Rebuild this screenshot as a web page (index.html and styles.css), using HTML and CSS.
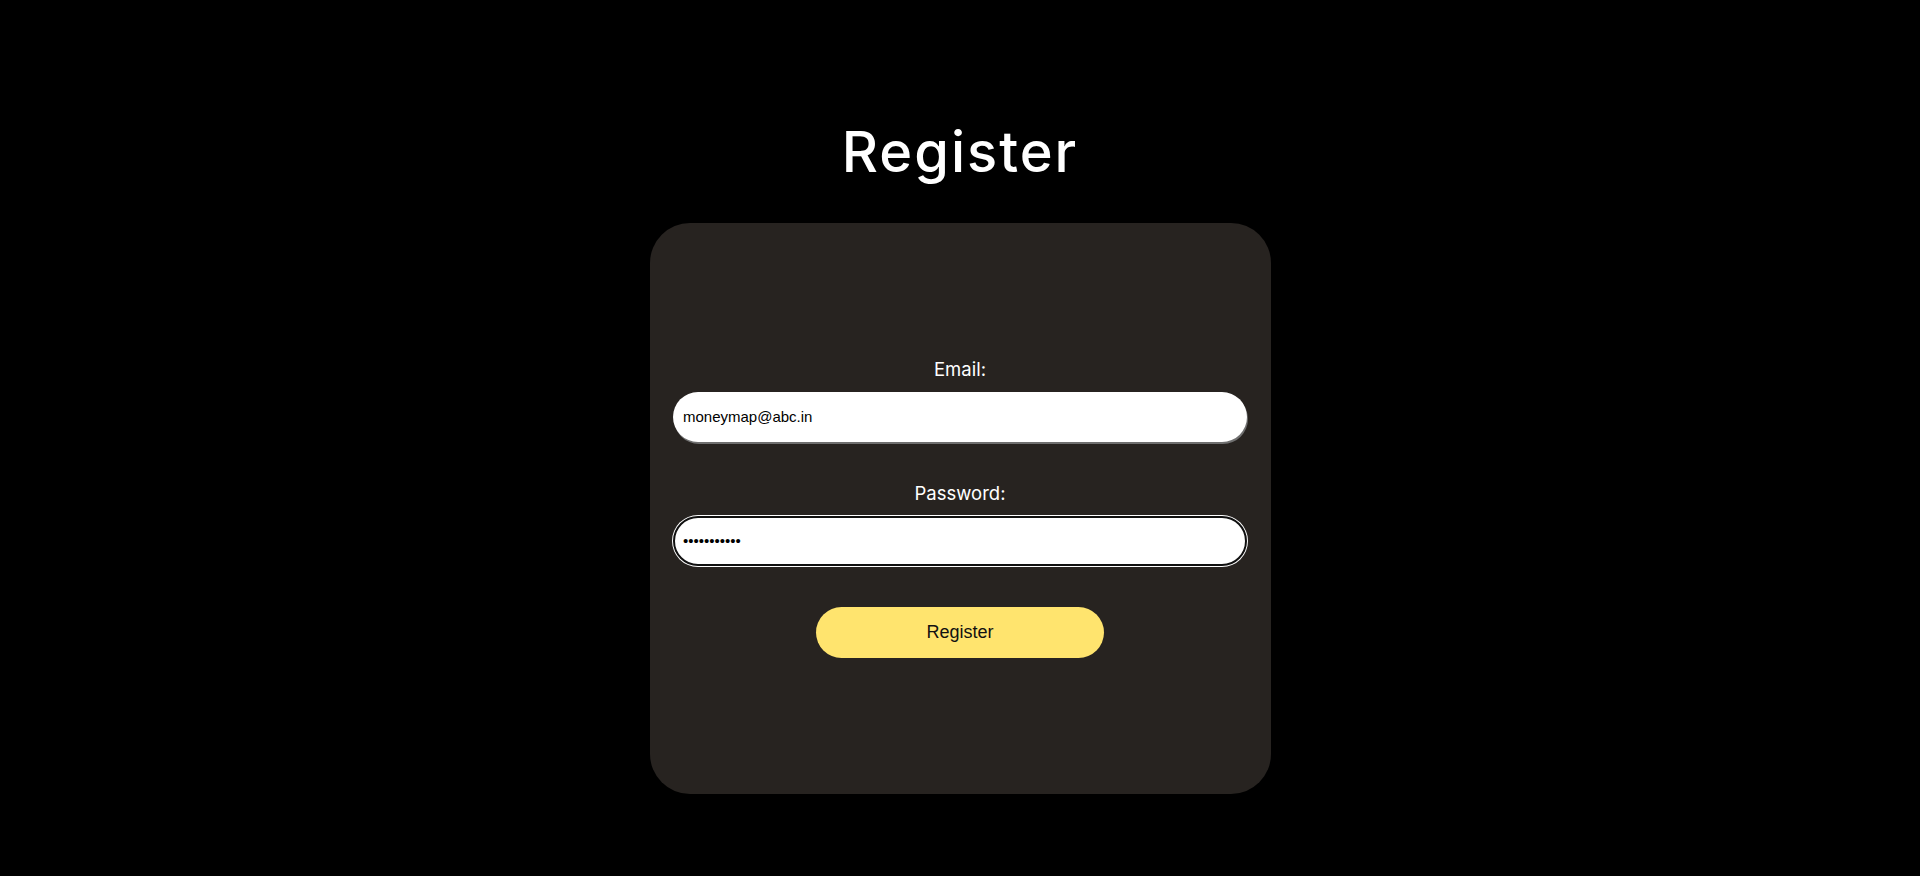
FILE: index.html
```html
<!DOCTYPE html>
<html lang="en">

<head>
    <meta charset="UTF-8">
    <meta name="viewport" content="width=device-width, initial-scale=1.0">
    <title>Register</title>
    <link rel="stylesheet" href="styles.css">
</head>

<body>
    <h1 class="title">Register</h1>

    <!-- Register form -->
    <div class="card">
        <form class="form" onsubmit="return false;">
            <label for="email">Email:</label>
            <input type="email" id="email" class="field field-email" value="moneymap@abc.in">

            <label for="password">Password:</label>
            <input type="password" id="password" class="field field-active" value="12345678901">

            <button type="submit" class="btn">Register</button>
        </form>
    </div>
</body>

</html>
```

FILE: styles.css
```css
body {
    font-family: Inter, 'Noto Sans', sans-serif;
    background-color: #000;
    color: #fff;
    margin: 0;
    padding: 118px 0 0;
    box-sizing: border-box;
}

.title {
    margin: 0;
    text-align: center;
    font-size: 56px;
    font-weight: 500;
    line-height: 68px;
    letter-spacing: 2px;
}

.card {
    width: 621px;
    height: 571px;
    margin: 37px auto 0;
    padding-bottom: 2px;
    box-sizing: border-box;
    background-color: #272320;
    border-radius: 40px;
    display: flex;
    align-items: center;
    justify-content: center;
}

.form {
    width: 574px;
    display: flex;
    flex-direction: column;
    align-items: center;
}

label {
    font-size: 18.5px;
    line-height: 22px;
    margin-bottom: 12px;
}

.field {
    width: 100%;
    height: 50px;
    box-sizing: border-box;
    margin: 0 0 40px;
    padding: 0 10px;
    border: none;
    border-radius: 25px;
    background-color: #fff;
    color: #000;
    font-family: 'Liberation Sans', Arial, sans-serif;
    font-size: 15px;
    outline: none;
}

.field-email {
    box-shadow: 1px 2px 0 #6f6f6f;
}

.field-active {
    border: 2px solid #101010;
    box-shadow: 0 0 0 1px #fff;
    padding: 0 8px;
    margin-bottom: 41px;
}

.btn {
    width: 288px;
    height: 51px;
    border: none;
    border-radius: 26px;
    background-color: #ffe46e;
    color: #111;
    font-family: 'Liberation Sans', Arial, sans-serif;
    font-size: 18px;
    cursor: pointer;
}
```
